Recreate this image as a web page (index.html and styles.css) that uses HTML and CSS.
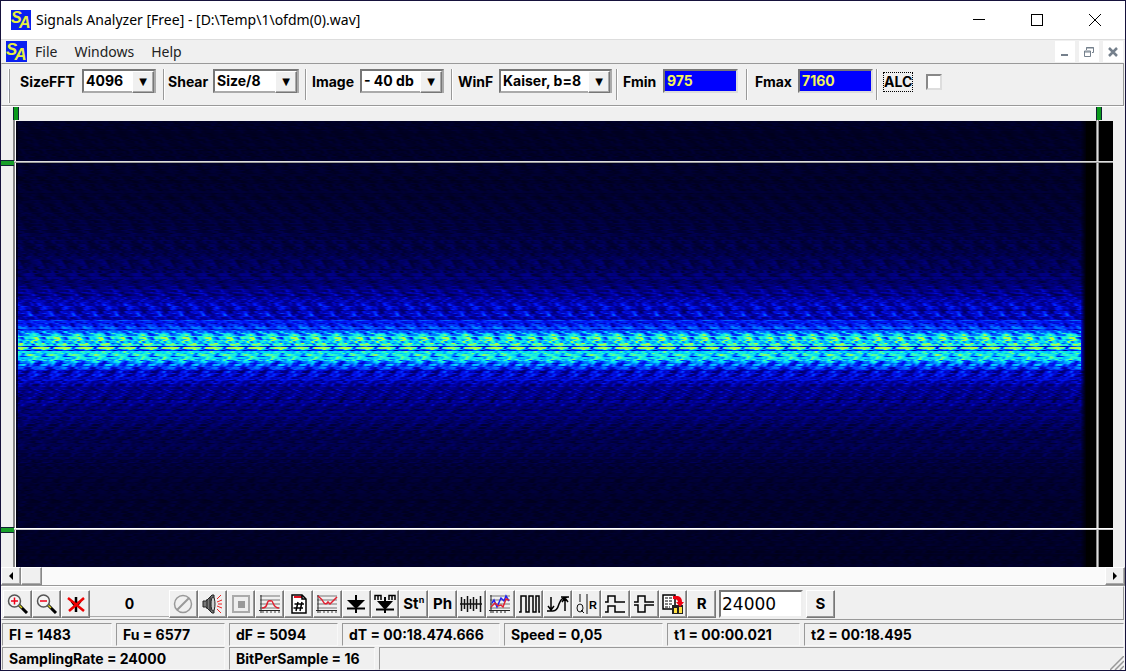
FILE: index.html
```html
<!DOCTYPE html>
<html lang="en">
<head>
<meta charset="utf-8">
<title>Signals Analyzer [Free] - [D:\Temp\1\ofdm(0).wav]</title>
<link rel="stylesheet" href="styles.css">
</head>
<body>
<div class="window">
  <header class="titlebar">
    <svg class="logo" viewBox="0 0 20 20"><rect width="20" height="20" fill="#0a20f0"/><text x="0" y="13" class="logo-letter">S</text><text x="8" y="18" class="logo-letter">A</text></svg>
    <h1 class="title">Signals Analyzer [Free] - [D:\Temp\1\ofdm(0).wav]</h1>
    <div class="caption-buttons">
      <button class="caption" aria-label="Minimize"><svg viewBox="0 0 12 12"><path d="M0 5.5h12"/></svg></button>
      <button class="caption" aria-label="Maximize"><svg viewBox="0 0 12 12"><path d="M.5.5h11v11H.5z"/></svg></button>
      <button class="caption" aria-label="Close"><svg viewBox="0 0 12 12"><path d="M0 0l12 12M12 0L0 12"/></svg></button>
    </div>
  </header>

  <nav class="menubar">
    <svg class="logo" viewBox="0 0 20 20"><rect width="20" height="20" fill="#0a20f0"/><text x="0" y="13" class="logo-letter">S</text><text x="8" y="18" class="logo-letter">A</text></svg>
    <button class="menu">File</button>
    <button class="menu">Windows</button>
    <button class="menu">Help</button>
    <div class="mdi-buttons">
      <button class="mdi" aria-label="Minimize document"><svg viewBox="0 0 12 12"><path d="M2 9h7" stroke-width="2"/></svg></button>
      <button class="mdi" aria-label="Restore document"><svg viewBox="0 0 12 12"><path d="M3.500 4V1.500h7v5H9M3 2h8" /><path d="M1.500 5h6v5.500h-6zM1 6h7" /></svg></button>
      <button class="mdi" aria-label="Close document"><svg viewBox="0 0 12 12"><path d="M2 2l8 8M10 2l-8 8" stroke-width="2.500"/></svg></button>
    </div>
  </nav>

  <section class="toolbar">
    <div class="band band-size"><label for="fft">SizeFFT</label><span class="combo"><select id="fft"><option>4096</option></select></span></div>
    <div class="band band-shear"><label for="shear">Shear</label><span class="combo"><select id="shear"><option>Size/8</option></select></span></div>
    <div class="band band-image"><label for="image">Image</label><span class="combo"><select id="image"><option>- 40 db</option></select></span></div>
    <div class="band band-win"><label for="winf">WinF</label><span class="combo"><select id="winf"><option>Kaiser, b=8</option></select></span></div>
    <div class="band band-fmin"><label for="fmin">Fmin</label><input class="freq" id="fmin" type="text" value="975"></div>
    <div class="band band-fmax"><label for="fmax">Fmax</label><input class="freq" id="fmax" type="text" value="7160"></div>
    <div class="band band-alc"><label class="focus" for="alc">ALC</label><input class="check" id="alc" type="checkbox"></div>
  </section>

  <main class="plot">
    <canvas class="spectrum" id="spectrum"></canvas>
    <i class="vline vline-left"></i>
    <i class="vline vline-right"></i>
    <i class="hline hline-top"></i>
    <i class="hline hline-bottom"></i>
  </main>

  <div class="scrollbar">
    <button class="scroll-btn" aria-label="Scroll left"><svg viewBox="0 0 8 8"><path d="M6 0v8L2 4z"/></svg></button>
    <div class="thumb"></div>
    <button class="scroll-btn scroll-right" aria-label="Scroll right"><svg viewBox="0 0 8 8"><path d="M2 0v8l4-4z"/></svg></button>
  </div>

  <section class="tools">
    <div class="tool-group zoom-group">
      <button class="tool" aria-label="Zoom in"><svg viewBox="0 0 24 20"><path d="M13 11l8 8" stroke="#000" stroke-width="3"/><path d="M13 11l3 3" stroke="#d8d020" stroke-width="1.500"/><circle cx="8.500" cy="7" r="6" fill="#f4f4f4" stroke="#555" stroke-width="1.500"/><path d="M5 7h7M8.500 3.500v7" stroke="#f00018" stroke-width="1.500"/></svg></button>
      <button class="tool" aria-label="Zoom out"><svg viewBox="0 0 24 20"><path d="M13 11l8 8" stroke="#000" stroke-width="3"/><path d="M13 11l3 3" stroke="#d8d020" stroke-width="1.500"/><circle cx="8.500" cy="7" r="6" fill="#f4f4f4" stroke="#555" stroke-width="1.500"/><path d="M5 7h7" stroke="#f00018" stroke-width="1.500"/></svg></button>
      <button class="tool" aria-label="Cancel zoom"><svg viewBox="0 0 24 20"><path d="M12 3v6M9 9h6l-3 4zM12 14v4" stroke="#000" stroke-width="2.500" fill="#000"/><path d="M4 4l16 13M20 4L5 17" stroke="#f00000" stroke-width="2.500"/></svg></button>
    </div>
    <output class="counter">0</output>
    <div class="tool-group main-group">
      <button class="tool" aria-label="Stop"><svg viewBox="0 0 24 20"><circle cx="12" cy="10" r="8.500" fill="none" stroke="#999" stroke-width="1.500"/><path d="M6 16L18 4" stroke="#999" stroke-width="2"/></svg></button>
      <button class="tool" aria-label="Play sound"><svg viewBox="0 0 24 20"><path d="M3 7h3l6-6h2v18h-2l-6-6H3z" fill="#777" stroke="#222"/><path d="M7 5v10M10 3v14" stroke="#222" stroke-width="1"/><ellipse cx="13" cy="10" rx="2" ry="7" fill="#ccc" stroke="#222"/><path d="M17 5l4-4M17 8l5-2M18 10h4M17 12l5 2M17 15l4 4" stroke="#f02020"/></svg></button>
      <button class="tool" aria-label="Selection"><svg viewBox="0 0 24 20"><path d="M4 2h16v16H4z" fill="#eee" stroke="#aaa" stroke-width="2"/><path d="M9 7h7v7H9z" fill="#999"/></svg></button>
      <button class="tool" aria-label="Spectrum"><svg viewBox="0 0 24 20"><path d="M2 2h20M2 6h20M2 10h20M2 14h20" stroke="#777"/><path d="M3 1v18M1 16.500h21" stroke="#222"/><path d="M5 17v2M9 17v2M13 17v2M17 17v2M21 17v2" stroke="#444"/><path d="M4 14q4 0 5-4t3-3q2-1 3 2 2 5 6 5" fill="none" stroke="#e02030" stroke-width="1.500"/></svg></button>
      <button class="tool" aria-label="Properties"><svg viewBox="0 0 24 20"><path d="M5 1h10l4 4v14H5z" fill="#fff" stroke="#000" stroke-width="1.500"/><path d="M7 3h8" stroke="#e01020" stroke-width="2"/><path d="M15 1v4h4M7.500 10H17M6.500 14H16M11 8l-2 9M15 8l-2 9" fill="none" stroke="#000" stroke-width="1.500"/></svg></button>
      <button class="tool" aria-label="Inverse spectrum"><svg viewBox="0 0 24 20"><path d="M2 2h20M2 6h20M2 10h20M2 14h20" stroke="#777"/><path d="M3 1v18M1 16.500h21" stroke="#222"/><path d="M5 17v2M9 17v2M13 17v2M17 17v2M21 17v2" stroke="#444"/><path d="M3 2q4 3 6 7 2 2 4-1l2 2 2-2 5-5" fill="none" stroke="#e02030" stroke-width="1.500"/></svg></button>
      <button class="tool" aria-label="Detector"><svg viewBox="0 0 24 20"><path d="M12 1v18M3 14.500h18" stroke="#000" stroke-width="2"/><path d="M3 6h18l-9 9z"/></svg></button>
      <button class="tool" aria-label="Multi detector"><svg viewBox="0 0 24 20"><path d="M12 3v16M3 15.500h18" stroke="#000" stroke-width="2"/><path d="M4 7h16l-8 9z"/><path d="M2 6V1.500h6V6M5 1v5M16 6V1.500h6V6M19 1v5" fill="none" stroke="#000" stroke-width="1.500"/></svg></button>
      <button class="tool tool-text">St<sup>n</sup></button>
      <button class="tool tool-text">Ph</button>
      <button class="tool" aria-label="Waveform"><svg viewBox="0 0 24 20"><path d="M1 10h22M2.500 3v14M5.500 5v10M8.500 2v16M11.500 5v10M14.500 3v14M17.500 5v10M21.500 2v16" stroke="#111" stroke-width="1.500"/></svg></button>
      <button class="tool" aria-label="Two channels"><svg viewBox="0 0 24 20"><path d="M2 2h20M2 6h20M2 10h20M2 14h20" stroke="#777"/><path d="M3 1v18M1 16.500h21M5 17v2M9 17v2M13 17v2M17 17v2" stroke="#222"/><path d="M4 9l2-3 3 7 4-9 3 3 2-5 3 5" fill="none" stroke="#2020f0" stroke-width="1.500"/><path d="M3 13l4-4 3 3 3-1 2 2 3-8 3 1" fill="none" stroke="#e02030" stroke-width="1.500"/></svg></button>
      <button class="tool" aria-label="Pulses"><svg viewBox="0 0 24 20"><path d="M2 18h2V2h5v16h3V2h4v16h3V2h3v16h1" fill="none" stroke="#000" stroke-width="1.500"/></svg></button>
      <button class="tool" aria-label="Levels"><svg viewBox="0 0 24 20"><path d="M1 17h6q4 0 6-7t9-7M5 3v13M2 12l3 4 3-4M19 17V3M16 8l3-4 3 4M15 3h8" fill="none" stroke="#000" stroke-width="1.500"/></svg></button>
      <button class="tool" aria-label="I Q R"><svg viewBox="0 0 24 20"><path d="M5 0v8M12 0v20" stroke="#111"/><ellipse cx="5" cy="14" rx="3" ry="4" fill="none" stroke="#111"/><path d="M6 16l3 3" stroke="#111"/><text x="14" y="15" class="icon-letter">R</text></svg></button>
      <button class="tool" aria-label="Rising steps"><svg viewBox="0 0 24 20"><path d="M2 8h3V2h7v6h10M2 18h3v-6h7v6h10" fill="none" stroke="#000" stroke-width="1.500"/></svg></button>
      <button class="tool" aria-label="Pulse pair"><svg viewBox="0 0 24 20"><path d="M2 8h4V2h7v6h9M2 11h4v7h7v-7h9" fill="none" stroke="#000" stroke-width="1.500"/></svg></button>
      <button class="tool" aria-label="Copy data"><svg viewBox="0 0 24 20"><path d="M2 1h12v14H2z" fill="#fff" stroke="#000" stroke-width="1.500"/><path d="M4 4h8M4 7h8M4 10h8M4 13h5" stroke="#000" stroke-dasharray="3 1"/><path d="M11 11h11v9H11z" fill="#222"/><path d="M13 14h3v5h-3zM18 13h3v6h-3z" fill="#ffe040"/><path d="M12 2h5q4 1 4 6h2l-4 5-4-5h2q0-3-5-3z" fill="#f00010"/></svg></button>
      <button class="tool tool-text">R</button>
    </div>
    <input class="rate" type="text" value="24000" aria-label="Rate">
    <button class="tool tool-text tool-s">S</button>
  </section>

  <footer class="status">
    <div class="row row-one"><span>Fl = 1483</span><span>Fu = 6577</span><span>dF = 5094</span><span>dT = 00:18.474.666</span><span>Speed = 0,05</span><span>t1 = 00:00.021</span><span>t2 = 00:18.495</span></div>
    <div class="row row-two"><span>SamplingRate = 24000</span><span>BitPerSample = 16</span><span></span></div>
    <svg class="grip" viewBox="0 0 14 14"><path d="M0 14L14 0M5 14l9-9M10 14l4-4" stroke="#999" stroke-width="1.500"/></svg>
  </footer>
</div>
<script src="spectrum.js"></script>
</body>
</html>
```
FILE: styles.css
```css
* { box-sizing: border-box; }
body {
  margin: 0;
  background: #16123c;
  color: #000;
  font: 700 14px/18px Inter, "Liberation Sans", sans-serif;
}
button, input, select { font: inherit; color: inherit; border-radius: 0; }
button { padding: 0; border: 0; background: none; }
.window {
  display: flex;
  flex-direction: column;
  height: 100vh;
  padding: 1px;
  background: #f0f0f0;
  box-shadow: inset 0 0 0 1px #16123c;
}
.titlebar {
  display: flex;
  align-items: center;
  flex: none;
  height: 38px;
  padding-left: 10px;
  background: #fff;
}
.logo { width: 20px; height: 20px; flex: none; }
.logo-letter { font: italic 700 16px "Liberation Sans", sans-serif; fill: #e8f040; }
.title {
  margin: 0 0 0 5px;
  font: 400 14px/20px "Noto Sans", "Open Sans", sans-serif;
  white-space: nowrap;
}
.caption-buttons { display: flex; margin-left: auto; padding-right: 1px; }
.caption { width: 58px; height: 38px; }
.caption svg { display: block; width: 12px; height: 12px; margin: auto; fill: none; stroke: #000; shape-rendering: crispEdges; }
.caption:last-child svg { shape-rendering: auto; }
.menubar {
  display: flex;
  align-items: center;
  flex: none;
  height: 24px;
  padding: 0 2px 0 5px;
  border-top: 1px solid #ddd;
}
.menubar .logo { width: 21px; height: 21px; }
.menu { margin-left: 8px; margin-right: 9px; font: 400 14px/20px "Noto Sans", "Open Sans", sans-serif; color: #222; }
.mdi-buttons { display: flex; gap: 4px; margin-left: auto; }
.mdi { width: 20px; height: 21px; background: #fff; }
.mdi svg { display: block; width: 12px; height: 12px; margin: auto; fill: none; stroke: #75808c; }

.toolbar {
  display: flex;
  flex: none;
  height: 43px;
  margin: 0 1px 0 0;
  padding: 5px 0 0 6px;
  border: 1px solid #999;
  border-left-color: #ddd;
  box-shadow: 0 1px #fff;
}
.band { display: flex; flex: none; align-items: flex-start; height: 31px; border-left: 1px solid #999; box-shadow: inset 1px 0 #fff; }
.band label { padding-top: 4px; line-height: 18px; }
.band-size { width: 155px; height: 34px; border-left: 0; box-shadow: inset 1px 0 #fff, inset 2px 0 #999; }
.band-shear { width: 142px; }
.band-image { width: 146px; }
.band-win { width: 165px; }
.band-fmin { width: 130px; }
.band-fmax { width: 130px; }
.band-alc { width: 80px; }
.band > label { margin-left: 6px; margin-right: auto; }
.band-size > label { margin-left: 12px; }
.band-shear > label { margin-left: 4px; }
.band-fmax > label { margin-left: 8px; }
.combo { position: relative; height: 24px; border: 2px solid; border-color: #777 #aaa #aaa #777; background: #fff; }
.combo select { width: 100%; height: 20px; padding: 0 0 0 2px; border: 0; background: none; appearance: none; line-height: 20px; outline: 0; }
.combo::after {
  content: "▼";
  position: absolute;
  top: 0;
  right: 0;
  width: 20px;
  height: 20px;
  background: #f0f0f0;
  border: 1px solid;
  border-color: #fff #777 #777 #fff;
  box-shadow: inset -1px -1px #aaa;
  font: 10px/20px "DejaVu Sans", sans-serif;
  text-align: center;
  pointer-events: none;
}
.band-size .combo { width: 74px; margin-right: 7px; }
.band-shear .combo { width: 86px; margin-right: 6px; }
.band-image .combo { width: 84px; margin-right: 7px; }
.band-win .combo { width: 113px; margin-right: 4px; }
.freq { width: 75px; height: 24px; margin-right: 8px; padding: 0 0 2px 2px; border: 2px solid; border-color: #777 #ddd #ddd #777; background: #00f; color: #f4f45a; }
.band-fmax .freq { margin-right: 3px; }
.band > .focus { height: 20px; margin-top: 3px; padding: 0; border: 1px dotted #000; }
.check { width: 16px; height: 16px; margin: 5px 14px 0 0; appearance: none; background: #fff; border: 2px solid; border-color: #888 #ddd #ddd #888; }

.plot {
  position: relative;
  flex: 1;
  min-height: 0;
  margin: 0 12px 0 0;
  padding: 15px 0 0 15px;
}
.spectrum { display: block; width: 100%; height: 100%; background: #000018; }
.vline, .hline { position: absolute; }
.vline { top: 1px; bottom: 0; width: 3px; background: linear-gradient(90deg, #888 2px, #fff 2px); }
.vline-left { left: 12px; }
.vline-right { right: 14px; background: linear-gradient(90deg, #888 1px, #ddd 1px, #ddd 2px, #888 2px); }
.vline::before { content: ""; position: absolute; top: 0; left: 0; width: 4px; height: 13px; background: #0a9a1c; border: 1px solid #123; border-width: 0 1px; }
.hline { left: 0; right: 0; height: 2px; background: linear-gradient(#ddd 1px, #999 1px); }
.hline-top { top: 55px; }
.hline-bottom { bottom: 37px; background: linear-gradient(#fff 1px, #ccc 1px); }
.hline::before { content: ""; position: absolute; left: 0; top: -1px; width: 13px; height: 4px; background: #18a028; border: 1px solid #123; border-width: 1px 0; }

.scrollbar { display: flex; flex: none; height: 19px; background: #fafafa; border-bottom: 1px solid #999; }
.scroll-btn, .thumb { width: 20px; height: 18px; background: #f0f0f0; border: 1px solid; border-color: #fff #888 #888 #fff; box-shadow: inset -1px -1px #aaa; }
.thumb { width: 21px; }
.scroll-btn svg { display: block; width: 8px; height: 8px; margin: auto; }
.scroll-right { margin-left: auto; }

.tools { display: flex; flex: none; align-items: flex-start; height: 34px; margin-right: 1px; padding: 3px 0 0 1px; border: 1px solid; border-color: #fff #999 #999 #fff; }
.tool-group { display: flex; }
.zoom-group { width: 87px; }
.main-group { width: 547px; }
.tool { flex: 1; height: 28px; background: #f0f0f0; border: 1px solid; border-color: #fff #777 #777 #fff; box-shadow: inset -1px -1px #999; }
.tool svg { display: block; width: 24px; height: 20px; margin: auto; }
.icon-letter { font: 700 11px "Liberation Sans", sans-serif; }
.tool-text { font-size: 15px; line-height: 20px; }
.tool-text sup { font-size: 9px; line-height: 8px; }
.tool-s { flex: none; width: 29px; margin-left: 3px; }
.counter { width: 79px; height: 27px; line-height: 28px; text-align: center; border-bottom: 1px solid #aaa; }
.rate { width: 84px; height: 28px; margin-left: 3px; padding: 0 0 0 1px; border: 2px solid; border-color: #777 #eee #eee #777; background: #fff; font: 400 17px/22px "DejaVu Sans", sans-serif; }

.status { position: relative; flex: none; padding: 3px 1px 1px 1px; }
.row { display: grid; column-gap: 4px; height: 22px; }
.row-one { grid-template-columns: 110px 109px 109px 158px 159px 133px 1fr; margin-bottom: 2px; }
.row-two { grid-template-columns: 223px 146px 1fr; }
.row span { padding-left: 6px; border: 1px solid; border-color: #999 #f8f8f8 #f8f8f8 #999; line-height: 21px; white-space: nowrap; }
.grip { position: absolute; right: 1px; bottom: 0; width: 14px; height: 14px; }
```
FILE: spectrum.js
```js
const canvas = document.getElementById("spectrum");

// Deterministic hash in the range 0..1
function hash(a, b) {
  let h = Math.imul(a + 71, 374761393) ^ Math.imul(b + 13, 668265263);
  h = Math.imul(h ^ (h >>> 13), 1274126177);
  return ((h ^ (h >>> 16)) >>> 0) / 4294967296;
}

// Smooth horizontal noise; each row has its own sequence
function streak(pos, row, period) {
  const i = Math.floor(pos);
  const t = pos - i;
  const s = t * t * (3 - 2 * t);
  const wrap = n => ((n % period) + period) % period;
  return hash(wrap(i), row) * (1 - s) + hash(wrap(i + 1), row) * s;
}

// Signal level by distance from the carrier centre, in rows
const levels = [[-226, 0.06], [-150, 0.08], [-100, 0.13], [-65, 0.2], [-44, 0.31], [-24, 0.4], [-17, 0.46], [-15, 0.68], [-8, 0.8], [-3, 0.82], [6, 0.77], [13, 0.75], [17, 0.62], [21, 0.46], [26, 0.38], [40, 0.29], [60, 0.23], [90, 0.15], [140, 0.08], [220, 0.06]];
function level(d) {
  if (d <= levels[0][0]) return levels[0][1];
  for (let i = 1; i < levels.length; i++) {
    const [x0, y0] = levels[i - 1], [x1, y1] = levels[i];
    if (d <= x1) return y0 + (y1 - y0) * (d - x0) / (x1 - x0);
  }
  return 0.06;
}

const stops = [[0, 0, 0, 12], [0.12, 0, 0, 64], [0.3, 0, 0, 160], [0.42, 0, 20, 245], [0.58, 0, 120, 255], [0.74, 0, 215, 255], [0.88, 50, 255, 190], [1, 170, 255, 70]];
function color(v) {
  for (let i = 1; i < stops.length; i++) {
    if (v <= stops[i][0] || i === stops.length - 1) {
      const a = stops[i - 1], b = stops[i];
      const t = Math.min(1, Math.max(0, (v - a[0]) / (b[0] - a[0])));
      return [1, 2, 3].map(k => a[k] + (b[k] - a[k]) * t);
    }
  }
}

function draw() {
  const w = canvas.width = canvas.clientWidth;
  const h = canvas.height = canvas.clientHeight;
  const ctx = canvas.getContext("2d");
  const img = ctx.createImageData(w, h);
  const end = w - 33;
  for (let y = 0; y < h; y++) {
    const d = y - Math.round(h * 0.504);
    const base = level(d);
    const row = Math.floor(y * 0.7);
    for (let x = 0; x < w; x++) {
      const slant = (d < 0 ? -1 : 1) * y * 0.16;
      const fine = streak(x / 3.6 + slant, row, 6);
      const loose = streak(x / 4 + 40, row + 500, 997);
      const wave = 0.5 + 0.5 * Math.sin(x / 21.6 * 6.283 + Math.abs(d) * 0.32);
      let v = base * (0.42 + 0.66 * fine + 0.2 * loose + 0.24 * wave);
      if (d === 0 || d === 4) v *= 0.6;
      if (d === -1 || d === -10) v = v * 0.6 + 0.34;
      if (x > end || x < 2) {
        const edge = x < 2 ? 0.35 : Math.max(0, 1 - (x - end) / 5);
        v = Math.min(v, 0.45) * edge;
      }
      const [r, g, b] = color(v);
      const o = (y * w + x) * 4;
      img.data[o] = r;
      img.data[o + 1] = g;
      img.data[o + 2] = x > end + 5 ? 0 : b;
      img.data[o + 3] = 255;
    }
  }
  ctx.putImageData(img, 0, 0);
}

window.addEventListener("resize", draw);
draw();
```
